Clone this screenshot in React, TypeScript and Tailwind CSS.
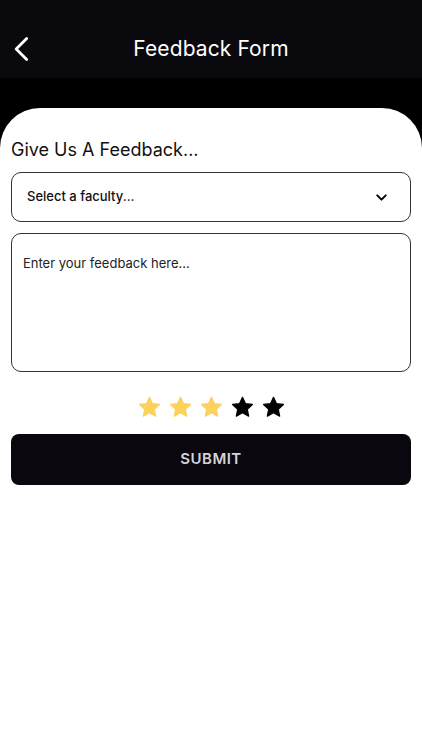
import { useState } from "react";
import { ChevronDown } from "lucide-react";

function Star({ filled }: { filled: boolean }) {
  return (
    <svg viewBox="0 0 24 24" className="w-[25px] h-[25px]">
      <path
        d="M12 2.2l2.9 6.1 6.6.8-4.9 4.6 1.3 6.6L12 17l-5.9 3.3 1.3-6.6-4.9-4.6 6.6-.8z"
        fill={filled ? "#fcd15c" : "#000000"}
        stroke={filled ? "#fcd15c" : "#000000"}
        strokeWidth="1.2"
        strokeLinejoin="round"
      />
    </svg>
  );
}

export default function App() {
  const [rating, setRating] = useState(3);

  return (
    <div
      className="w-[422px] h-[750px] bg-black flex flex-col"
      style={{ fontFamily: "Inter, 'Noto Sans', sans-serif" }}
    >
      {/* Header */}
      <div className="h-[78px] bg-[#0a090e] flex items-center relative shrink-0 pt-[20px]">
        <svg
          viewBox="0 0 24 24"
          className="absolute left-[8px] top-[35px] w-[28px] h-[28px]"
          fill="none"
          stroke="white"
          strokeWidth="2.4"
          strokeLinecap="round"
          strokeLinejoin="round"
        >
          <path d="M16 3 L7 12 L16 21" />
        </svg>
        <h1 className="w-full text-center text-white text-[21px] font-normal tracking-[0.1px]">
          Feedback Form
        </h1>
      </div>

      <div className="h-[30px] bg-black shrink-0" />

      {/* Panel */}
      <div className="flex-1 bg-white rounded-t-[40px] px-[11px] pt-[28px]">
        <h2 className="text-[18px] text-[#111] mb-[9px]">Give Us A Feedback...</h2>

        <div className="h-[50px] border-[1.5px] border-[#333] rounded-[10px] flex items-center justify-between pl-[15px] pr-[20px]">
          <span className="text-[13px] font-medium text-[#111]">Select a faculty...</span>
          <ChevronDown className="w-[17px] h-[17px] text-black" strokeWidth={2.8} />
        </div>

        <div className="mt-[11px] h-[139px] border-[1.5px] border-[#333] rounded-[10px] px-[11px] pt-[16px]">
          <span className="text-[13px] text-[#222]">Enter your feedback here...</span>
        </div>

        <div className="flex justify-center gap-[6px] mt-[23px] ml-[1px]">
          {[1, 2, 3, 4, 5].map((i) => (
            <button key={i} onClick={() => setRating(i)}>
              <Star filled={i <= rating} />
            </button>
          ))}
        </div>

        <button className="mt-[14px] w-full h-[51px] bg-[#0a070f] rounded-[8px] text-[#d4d4d8] text-[15px] font-semibold tracking-[0.5px]">
          SUBMIT
        </button>
      </div>
    </div>
  );
}
